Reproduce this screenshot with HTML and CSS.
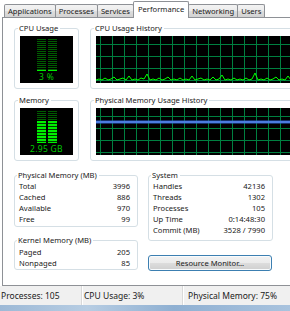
FILE: index.html
```html
<!DOCTYPE html>
<html lang="en">
<head>
    <meta charset="UTF-8">
    <title>Windows Task Manager - Performance</title>
    <link rel="stylesheet" href="styles.css">
</head>
<body>
    <div class="tabs">
        <div class="tab">Applications</div>
        <div class="tab">Processes</div>
        <div class="tab">Services</div>
        <div class="tab active">Performance</div>
        <div class="tab">Networking</div>
        <div class="tab">Users</div>
    </div>

    <div class="panel">
        <div class="charts">
            <fieldset class="box meter-box">
                <legend>CPU Usage</legend>
                <div class="meter">
                    <div class="bars">
                        <div class="bar"><div class="lit" style="height: 3%"></div></div>
                        <div class="bar"><div class="lit" style="height: 3%"></div></div>
                    </div>
                    <div class="meter-value">3 %</div>
                </div>
            </fieldset>

            <fieldset class="box history-box">
                <legend>CPU Usage History</legend>
                <div class="graph">
                    <svg width="200" height="47" viewBox="0 0 200 47">
                        <polyline class="cpu-line" points="0,44 3,43 6,44 9,42 12,44 15,43 18,41 21,44 24,43 27,42 30,44 33,40 36,44 39,43 42,44 45,42 48,43 51,38 54,44 57,43 60,44 63,42 66,44 69,43 72,41 75,44 78,43 81,44 84,42 87,44 90,43 93,44 96,40 99,44 102,43 105,42 108,44 111,43 114,44 117,41 120,44 123,43 126,39 129,44 132,43 135,44 138,42 141,44 144,43 147,44 150,42 153,44 156,43 159,37 162,44 165,43 168,44 171,42 174,44 177,43 180,41 183,44 186,43 189,44 192,40 195,44 198,43"/>
                    </svg>
                </div>
            </fieldset>

            <fieldset class="box meter-box">
                <legend>Memory</legend>
                <div class="meter">
                    <div class="bars">
                        <div class="bar"><div class="lit" style="height: 70%"></div></div>
                        <div class="bar"><div class="lit" style="height: 70%"></div></div>
                    </div>
                    <div class="meter-value">2.95 GB</div>
                </div>
            </fieldset>

            <fieldset class="box history-box">
                <legend>Physical Memory Usage History</legend>
                <div class="graph">
                    <svg width="200" height="47" viewBox="0 0 200 47">
                        <line class="mem-line" x1="0" y1="14" x2="200" y2="14"/>
                        <line class="mem-line-hi" x1="0" y1="14" x2="200" y2="14"/>
                    </svg>
                </div>
            </fieldset>
        </div>

        <div class="stats">
            <div class="stats-col">
                <fieldset class="box table-box">
                    <legend>Physical Memory (MB)</legend>
                    <div class="row"><span>Total</span><span>3996</span></div>
                    <div class="row"><span>Cached</span><span>886</span></div>
                    <div class="row"><span>Available</span><span>970</span></div>
                    <div class="row"><span>Free</span><span>99</span></div>
                </fieldset>

                <fieldset class="box table-box kernel">
                    <legend>Kernel Memory (MB)</legend>
                    <div class="row"><span>Paged</span><span>205</span></div>
                    <div class="row"><span>Nonpaged</span><span>85</span></div>
                </fieldset>
            </div>

            <div class="stats-col">
                <fieldset class="box table-box system">
                    <legend>System</legend>
                    <div class="row"><span>Handles</span><span>42136</span></div>
                    <div class="row"><span>Threads</span><span>1302</span></div>
                    <div class="row"><span>Processes</span><span>105</span></div>
                    <div class="row"><span>Up Time</span><span>0:14:48:30</span></div>
                    <div class="row"><span>Commit (MB)</span><span>3528 / 7990</span></div>
                </fieldset>

                <button class="monitor-btn">Resource Monitor...</button>
            </div>
        </div>
    </div>

    <div class="statusbar">
        <div class="status-cell first">Processes: 105</div>
        <div class="status-cell second">CPU Usage: 3%</div>
        <div class="status-cell third">Physical Memory: 75%</div>
    </div>
    <div class="frame"></div>
</body>
</html>
```

FILE: styles.css
```css
body {
    margin: 0;
    width: 290px;
    height: 311px;
    overflow: hidden;
    background: #fff;
    font-family: "Noto Sans", sans-serif;
    font-size: 7.6px;
    color: #1a1a1a;
}

/* tab strip */
.tabs {
    display: flex;
    align-items: flex-end;
    height: 17px;
    padding-left: 4px;
}

.tab {
    height: 12px;
    line-height: 12px;
    padding: 0 3px;
    margin-right: -1px;
    border: 1px solid #8e9196;
    border-bottom: none;
    border-radius: 2px 2px 0 0;
    background: linear-gradient(#f3f3f3, #ebebeb 50%, #dedede 50%, #d2d2d2);
    white-space: nowrap;
}

.tab.active {
    position: relative;
    z-index: 1;
    height: 16px;
    line-height: 14px;
    margin-bottom: -1px;
    padding: 0 4px;
    background: #fff;
}

/* main page */
.panel {
    box-sizing: border-box;
    height: 269px;
    margin-left: 2px;
    border: 1px solid #8e9196;
    border-right: none;
    background: #fff;
}

.box {
    margin: 0;
    border: 1px solid #d5dfe5;
    border-radius: 3px;
    min-width: 0;
}

.box legend {
    padding: 0 2px 0 1px;
    margin-left: -2px;
    line-height: 11px;
    white-space: nowrap;
}

.charts {
    display: grid;
    grid-template-columns: 65px 260px;
    column-gap: 11px;
    row-gap: 6px;
    padding: 5px 0 0 11px;
}

.meter-box,
.history-box {
    padding: 2px 5px 5px;
}

.meter {
    display: flex;
    flex-direction: column;
    align-items: center;
    height: 47px;
    background: #000;
}

.bars {
    display: flex;
    gap: 2px;
    height: 32px;
    margin-top: 3px;
}

.bar {
    display: flex;
    flex-direction: column;
    justify-content: flex-end;
    width: 9px;
    background: repeating-linear-gradient(#005c00 0 1px, #000 1px 2px);
}

.lit {
    min-height: 1px;
    background: repeating-linear-gradient(#00f000 0 2px, #003a00 2px 3px);
}

.meter-value {
    margin-top: 1px;
    line-height: 10px;
    font-size: 8.5px;
    letter-spacing: 0.3px;
    color: #00c800;
    white-space: nowrap;
}

.graph {
    height: 47px;
    background-color: #000;
    background-image:
        linear-gradient(#008040 1px, transparent 1px),
        linear-gradient(90deg, #008040 1px, transparent 1px);
    background-size: 12px 12px;
    background-position: 0 8px, 4px 0;
}

.graph svg {
    display: block;
}

.cpu-line {
    fill: none;
    stroke: #00ff00;
    stroke-width: 1;
}

.mem-line {
    stroke: #2a5fd0;
    stroke-width: 3;
}

.mem-line-hi {
    stroke: #6f9cf0;
    stroke-width: 1;
}

/* numbers */
.stats {
    display: grid;
    grid-template-columns: 124px 125px;
    column-gap: 10px;
    padding: 9px 0 0 11px;
}

.stats-col {
    display: flex;
    flex-direction: column;
    align-items: stretch;
}

.table-box {
    padding: 0 7px 1px 4px;
}

.table-box.kernel {
    margin-top: 8px;
    padding: 1px 7px 0 4px;
}

.table-box.system {
    padding-bottom: 4px;
}

.row {
    display: flex;
    justify-content: space-between;
    line-height: 11px;
    white-space: nowrap;
}

.monitor-btn {
    height: 16px;
    margin-top: 14px;
    margin-right: 1px;
    padding: 0;
    border: 1px solid #3c7fb1;
    border-radius: 3px;
    background: linear-gradient(#f2f2f2, #ebebeb 50%, #dddddd 50%, #cfcfcf);
    box-shadow: inset 0 0 0 1px #f8fbfd;
    font-family: inherit;
    font-size: 7.6px;
    color: #1a1a1a;
}

/* status bar */
.statusbar {
    display: flex;
    height: 19px;
    line-height: 19px;
    font-size: 8.5px;
    background: #f0f0f0;
    white-space: nowrap;
}

.status-cell {
    border-right: 1px solid #d9d9d9;
    box-shadow: 1px 0 0 #fff;
}

.status-cell.first {
    width: 80px;
    padding-left: 1px;
}

.status-cell.second {
    width: 98px;
    padding-left: 2px;
}

.status-cell.third {
    flex: 1;
    padding-left: 5px;
    border-right: none;
    box-shadow: none;
}

.frame {
    height: 6px;
    background: linear-gradient(90deg, #9db9d6, #b7cde3 30%, #8fb0d2 60%, #a9c3de);
}
```
